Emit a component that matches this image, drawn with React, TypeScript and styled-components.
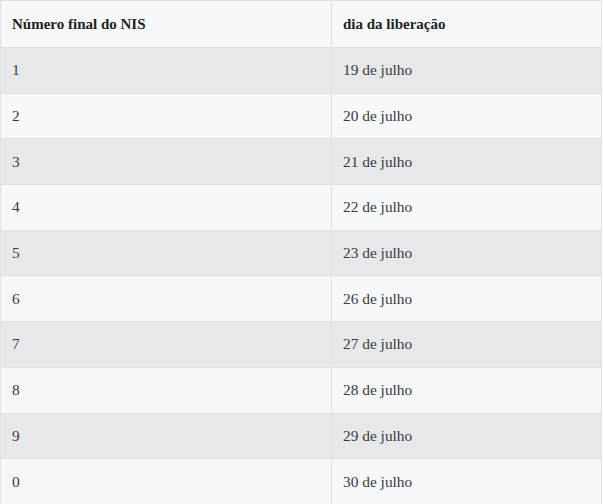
import React from "react";
import styled, { createGlobalStyle } from "styled-components";

const Global = createGlobalStyle`
  html, body { margin: 0; padding: 0; background: #ffffff; }
  body { font-family: "Liberation Serif", "DejaVu Serif", serif; }
`;

const Table = styled.table`
  width: 602px;
  border-collapse: collapse;
  table-layout: fixed;
  color: #3a3a3a;
  font-size: 15.4px;
`;

const Head = styled.th`
  text-align: left;
  font-weight: 700;
  font-size: 15px;
  color: #222222;
  background: #f7f8fa;
  height: 47px;
  padding: 0 11px;
  border: 1px solid #e0e2e5;
  box-sizing: border-box;
`;

const Cell = styled.td<{ $shade: boolean }>`
  height: 45.7px;
  padding: 0 11px;
  border: 1px solid #e0e2e5;
  background: ${(p) => (p.$shade ? "#e7e8e9" : "#f7f8fa")};
  box-sizing: border-box;
`;

const rows: [string, string][] = [
  ["1", "19 de julho"],
  ["2", "20 de julho"],
  ["3", "21 de julho"],
  ["4", "22 de julho"],
  ["5", "23 de julho"],
  ["6", "26 de julho"],
  ["7", "27 de julho"],
  ["8", "28 de julho"],
  ["9", "29 de julho"],
  ["0", "30 de julho"],
];

export default function App() {
  return (
    <>
      <Global />
      <Table>
        <colgroup>
          <col style={{ width: 331 }} />
          <col />
        </colgroup>
        <thead>
          <tr>
            <Head>Número final do NIS</Head>
            <Head>dia da liberação</Head>
          </tr>
        </thead>
        <tbody>
          {rows.map(([n, d], i) => (
            <tr key={n}>
              <Cell $shade={i % 2 === 0}>{n}</Cell>
              <Cell $shade={i % 2 === 0}>{d}</Cell>
            </tr>
          ))}
        </tbody>
      </Table>
    </>
  );
}
